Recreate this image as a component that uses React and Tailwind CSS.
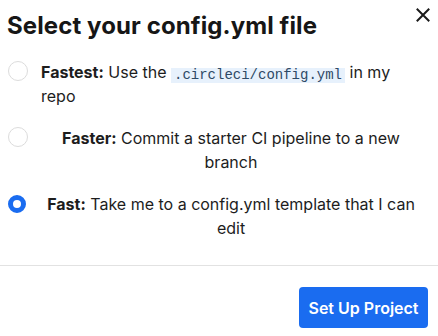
import React from "react";

function Radio({ checked }) {
  return checked ? (
    <span className="block w-[18px] h-[18px] rounded-full border-[5px] border-[#1a6cf0] bg-white" />
  ) : (
    <span className="block w-[20px] h-[20px] rounded-full border border-[#dcdcdc] bg-white" />
  );
}

export default function App() {
  return (
    <div
      className="relative w-[438px] h-[336px] bg-white overflow-hidden text-[#1d1d1d]"
      style={{ fontFamily: "Inter, 'Noto Sans', sans-serif" }}
    >
      <button className="absolute top-[8px] right-[8px] w-[14px] h-[14px] flex items-center justify-center">
        <svg width="14" height="14" viewBox="0 0 14 14" fill="none" stroke="#1a1a1a" strokeWidth="2" strokeLinecap="square">
          <path d="M1.5 1.5 L12.5 12.5 M12.5 1.5 L1.5 12.5" />
        </svg>
      </button>

      <h1 className="pl-[7px] pt-[10px] text-[24px] leading-[32px] font-bold tracking-[0.1px] text-[#161616]">
        Select your config.yml file
      </h1>

      <div className="mt-[18px] flex flex-col gap-[18px]">
        <div className="flex items-start">
          <div className="w-[41px] pl-[8px] pt-[1px] shrink-0">
            <Radio />
          </div>
          <p className="w-[380px] text-[16px] leading-[24px] text-left">
            <span className="font-bold">Fastest:</span>
            <span> Use the </span>
            <code
              className="inline-block align-[-1px] bg-[#e7f1fc] text-[#2e4a66] text-[14px] leading-[15px] px-[3px]"
              style={{ fontFamily: "'Liberation Mono', monospace" }}
            >
              .circleci/config.yml
            </code>
            <span> in my</span> <span>repo</span>
          </p>
        </div>

        <div className="flex items-start">
          <div className="w-[41px] pl-[8px] pt-[1px] shrink-0">
            <Radio />
          </div>
          <p className="w-[380px] text-[16px] leading-[24px] text-center">
            <span className="font-bold">Faster:</span> Commit a starter CI pipeline to a new branch
          </p>
        </div>

        <div className="flex items-start">
          <div className="w-[41px] pl-[8px] pt-[3px] shrink-0">
            <Radio checked />
          </div>
          <p className="w-[380px] text-[16px] leading-[24px] text-center">
            <span className="font-bold">Fast:</span> Take me to a config.yml template that I can edit
          </p>
        </div>
      </div>

      <div className="mt-[25px] border-t border-[#e2e2e2] flex justify-end pr-[10px] pt-[21px]">
        <button className="w-[129px] h-[41px] rounded-[4px] bg-[#1a6cf0] text-white text-[16px] font-semibold">
          Set Up Project
        </button>
      </div>
    </div>
  );
}
